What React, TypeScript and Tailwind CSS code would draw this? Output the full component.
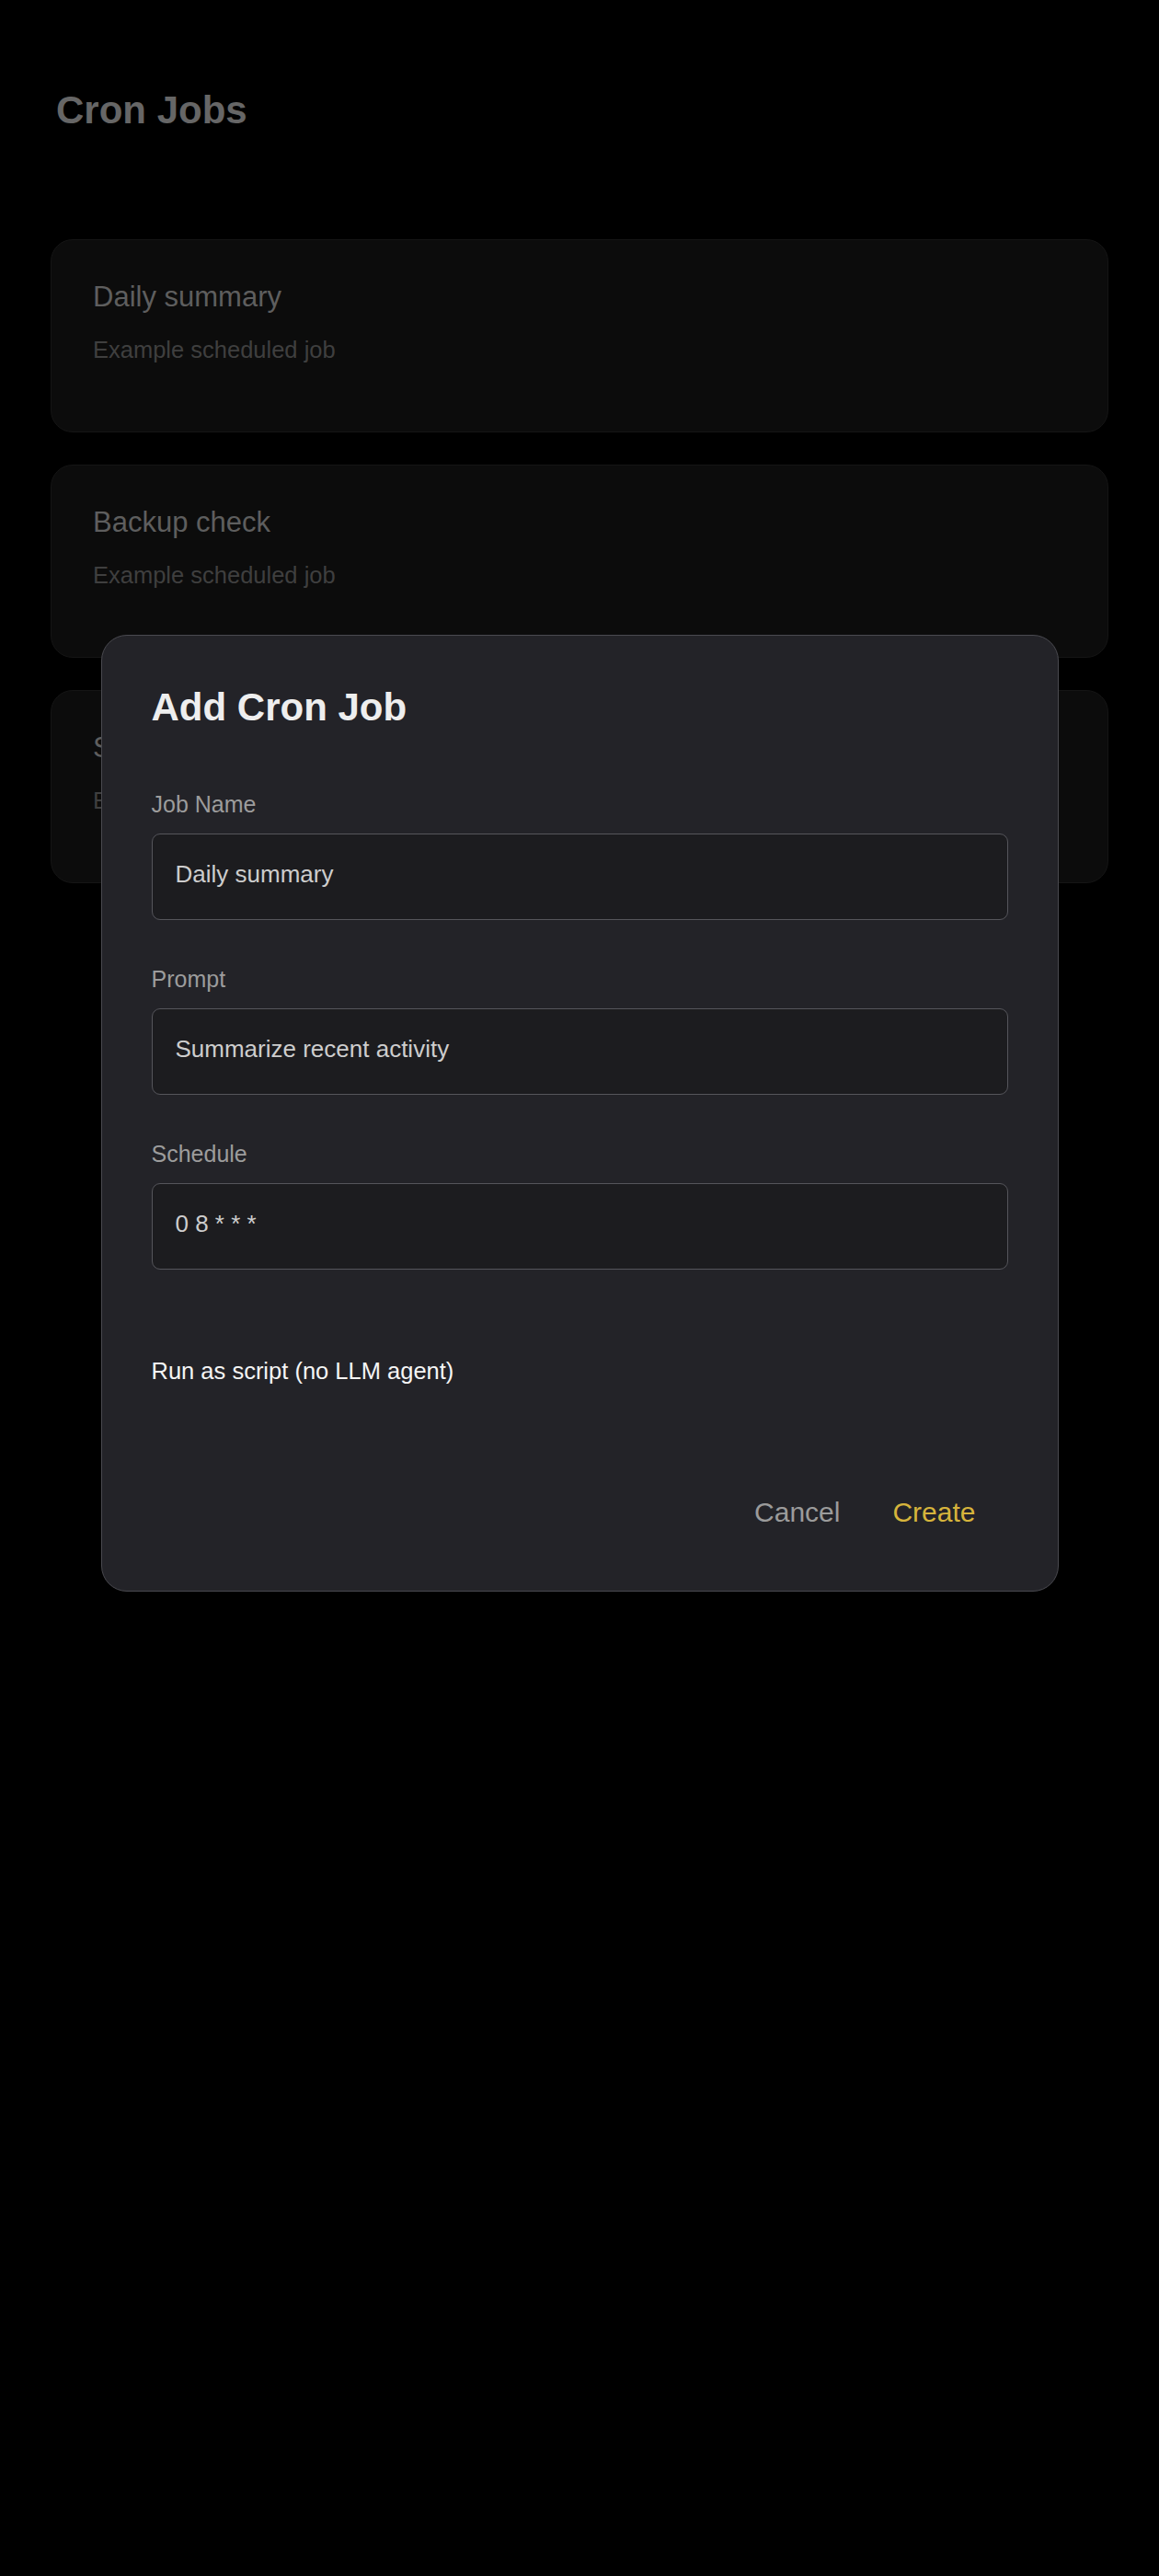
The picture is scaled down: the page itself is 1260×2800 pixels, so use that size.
import { useState } from "react";

interface CronJob {
  name: string;
  description: string;
}

const jobs: CronJob[] = [
  { name: "Daily summary", description: "Example scheduled job" },
  { name: "Backup check", description: "Example scheduled job" },
  { name: "Sync repositories", description: "Example scheduled job" },
];

const Field = ({ label, value }: { label: string; value: string }) => (
  <div className="flex flex-col">
    <span className="mb-[17px] text-[25px] leading-[29px] text-[#9c9c9c]">
      {label}
    </span>
    <div className="h-[94px] rounded-[9px] border border-[#55555b] bg-[#1c1c1f] px-[25px] pt-[28px] text-[26px] leading-[30px] text-[#cdcdcd]">
      {value}
    </div>
  </div>
);

export default function App() {
  const [name] = useState("Daily summary");
  const [prompt] = useState("Summarize recent activity");
  const [schedule] = useState("0 8 * * *");

  return (
    <div className="relative min-h-[2800px] bg-black font-['Liberation_Sans',Arial,sans-serif]">
      <h1 className="pl-[61px] pt-[96px] text-[42px] font-bold leading-[48px] text-[#666666]">
        Cron Jobs
      </h1>

      <div className="mt-[116px] flex flex-col gap-[35px] px-[55px]">
        {jobs.map((job) => (
          <div
            key={job.name}
            className="h-[210px] rounded-[24px] border border-[#151515] bg-[#0c0c0c] pl-[45px] pt-[44px]"
          >
            <div className="text-[31px] leading-[36px] text-[#5e5e5e]">
              {job.name}
            </div>
            <div className="mt-[24px] text-[25.5px] leading-[30px] text-[#3f3f3f]">
              {job.description}
            </div>
          </div>
        ))}
      </div>

      {/* dialog */}
      <div className="absolute inset-x-0 top-[690px] flex justify-center">
        <div className="w-[1041px] rounded-[28px] border border-[#4a4a50] bg-[#232328] p-[54px]">
          <h2 className="text-[42px] font-bold leading-[48px] text-[#eeeeee]">
            Add Cron Job
          </h2>

          <div className="mt-[67px] flex flex-col gap-[50px]">
            <Field label="Job Name" value={name} />
            <Field label="Prompt" value={prompt} />
            <Field label="Schedule" value={schedule} />
          </div>

          <div className="mt-[95px] text-[25.5px] leading-[30px] text-[#f5f5f5]">
            Run as script (no LLM agent)
          </div>

          <div className="mt-[107px] flex items-center justify-end gap-[21px] pr-[17px]">
            <button className="px-[18px] py-[14px] text-[30px] leading-[35px] text-[#9b9b9b]">
              Cancel
            </button>
            <button className="px-[18px] py-[14px] text-[30px] leading-[35px] text-[#d6b43c]">
              Create
            </button>
          </div>
        </div>
      </div>
    </div>
  );
}
